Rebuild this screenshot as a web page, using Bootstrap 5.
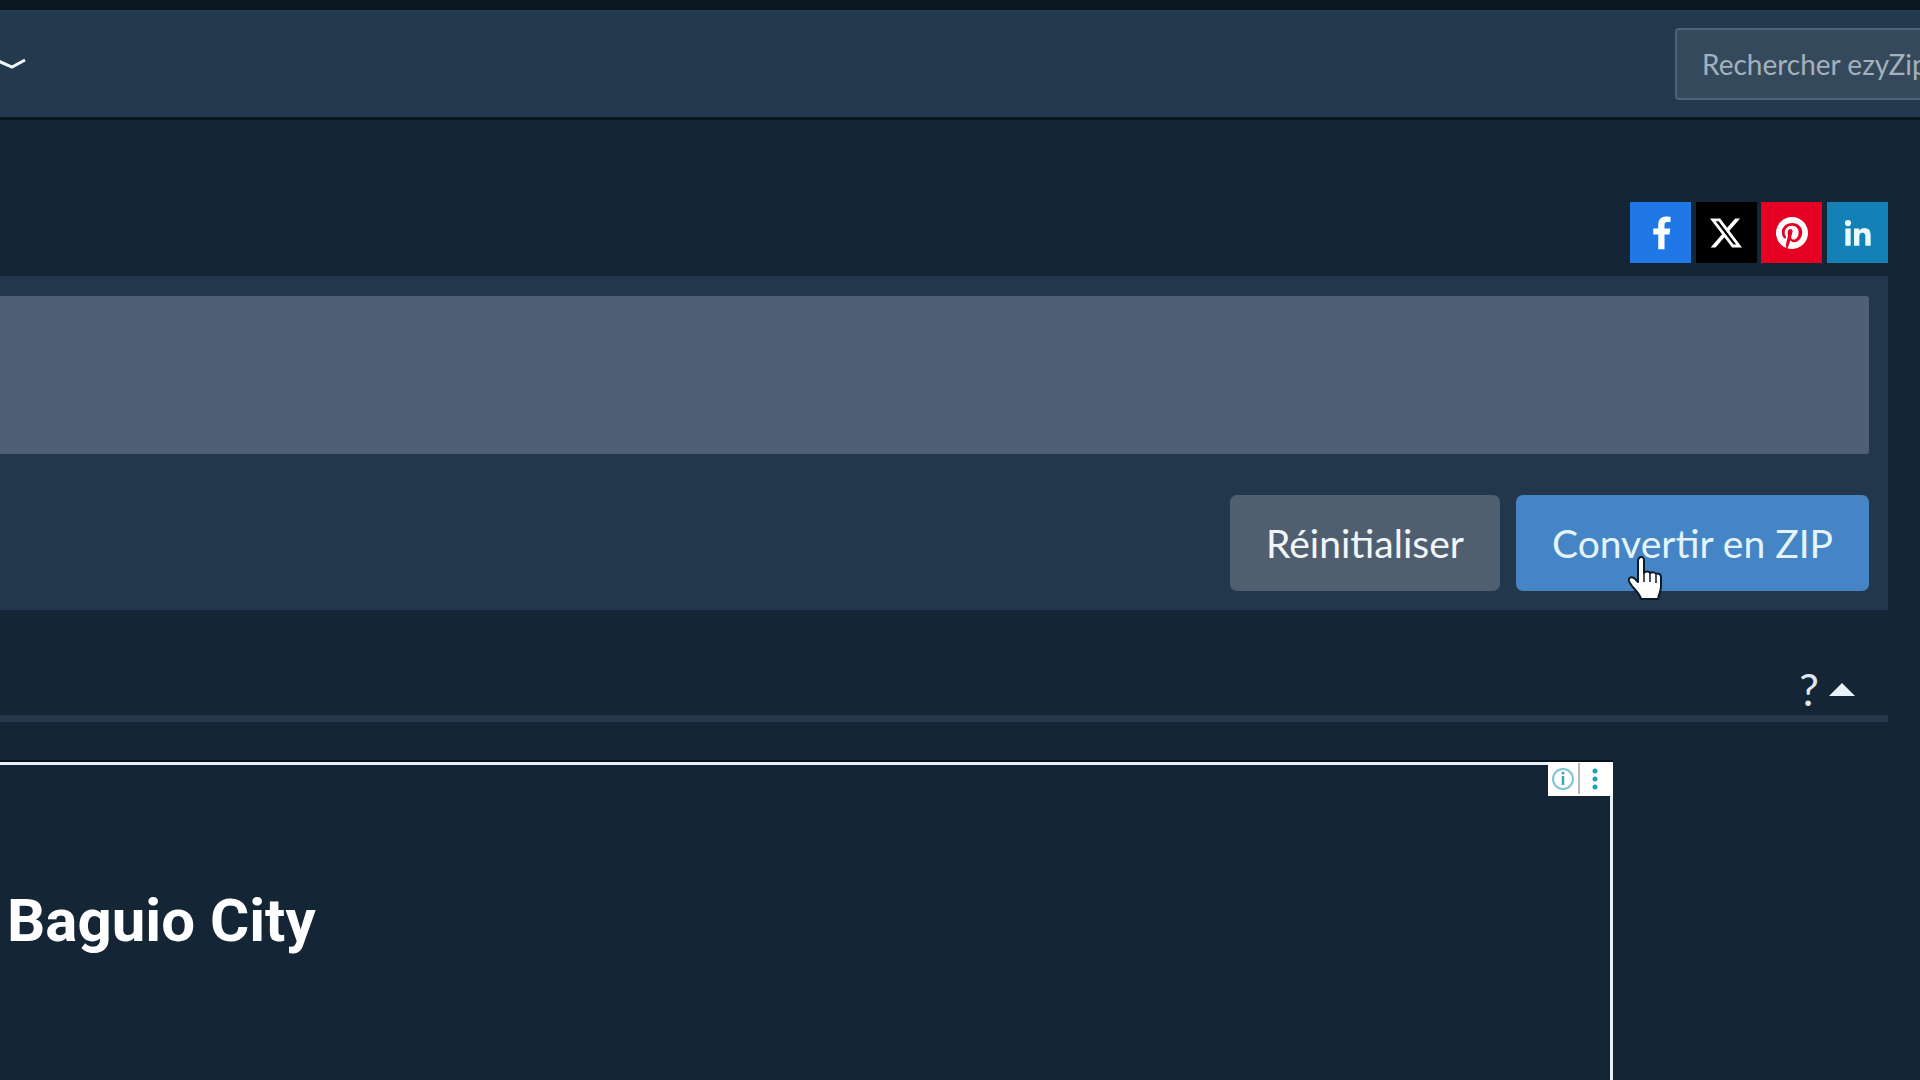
<!DOCTYPE html>
<html lang="fr">
<head>
    <meta charset="UTF-8">
    <meta name="viewport" content="width=device-width, initial-scale=1.0">
    <title>ezyZip</title>
    <link rel="stylesheet" href="https://cdn.jsdelivr.net/npm/bootstrap@5.3.0/dist/css/bootstrap.min.css">
    <style>
        html, body { height: 100%; }
        body { background: #142635; overflow: hidden; font-family: "Lato", "Liberation Sans", sans-serif; color: #e6edf3; }
        .top-strip { height: 10px; background: #0b1720; }
        .ez-nav { height: 110px; padding: 0; background: #233a4e; border-bottom: 3px solid #0b1822; flex-wrap: nowrap; }
        .nav-chevron { width: 26px; height: 14px; margin-top: 1px; flex-shrink: 0; }
        .search-box { flex: 0 0 400px; width: 400px; height: 72px; margin-left: auto; margin-right: -155px; font-size: 28px; padding: 0 25px; background: #34495c; border: 2px solid #4d6478; border-radius: 4px; color: #fff; }
        .search-box::placeholder { color: #a3b1bd; opacity: 1; }
        .share-row { margin-top: 82px; margin-right: 32px; gap: 4.6px; }
        .share-btn { width: 61px; height: 61px; }
        .share-fb { background: #1f78e5; }
        .share-x { background: #000; }
        .share-pin { background: #e60023; }
        .share-in { background: #1381b5; }
        .tool-panel { margin-top: 13px; margin-right: 32px; height: 334px; padding: 20px 19px 19px 0; background: #22374b; }
        .tool-input { height: 158px; background: #4f6076; border: 0; border-radius: 0 3px 3px 0; resize: none; }
        .tool-actions { margin-top: 41px; gap: 16px; }
        .act-btn { height: 96px; font-size: 39px; padding: 0; line-height: 1; border: 0; border-radius: 7px; color: #f2f6f8; }
        .act-reset { width: 270px; background: #505f6f; }
        .act-reset:hover { background: #505f6f; color: #f2f6f8; }
        .act-zip { width: 353px; background: #4585c5; color: #e4f4fc; position: relative; }
        .act-zip:hover { background: #4585c5; color: #e4f4fc; }
        .hand-cursor { position: absolute; left: 111px; top: 60px; width: 36px; height: 46px; }
        .help-row { height: 62px; margin-top: 43px; margin-right: 32px; padding: 10px 33px 0 0; gap: 10px; }
        .help-mark { font-size: 44px; line-height: 1; color: #dfe8ee; }
        .help-arrow { width: 0; height: 0; border-left: 13px solid transparent; border-right: 13px solid transparent; border-bottom: 13px solid #e8f2f8; margin-top: 1px; }
        .help-rule { height: 7px; margin: 0 32px 0 0; background: #24394c; border: 0; opacity: 1; }
        .ad-frame { position: relative; width: 1613px; height: 400px; margin-top: 40px; border-top: 3px solid #e8f0f8; border-right: 3px solid #e8f0f8; box-shadow: 0 -2px 0 #06101c; }
        .ad-title { padding: 120px 0 0 7px; font-family: "Roboto", "Liberation Sans", sans-serif; font-size: 60px; font-weight: 700; line-height: 1.2; color: #fff; }
        .ad-badge { position: absolute; top: -3px; right: -3px; width: 65px; height: 34px; background: #fff; }
        .ad-badge svg { display: block; }
    </style>
</head>
<body>
    <div class="top-strip"></div>

    <!-- Navbar -->
    <nav class="navbar ez-nav d-flex align-items-center">
        <svg class="nav-chevron" viewBox="0 0 26 14">
            <path d="M-4 3 L12 10 L25 3" fill="none" stroke="#f2f7fb" stroke-width="3"/>
        </svg>
        <input type="text" class="form-control search-box" placeholder="Rechercher ezyZip">
    </nav>

    <!-- Share buttons -->
    <div class="share-row d-flex justify-content-end">
        <a class="share-btn share-fb d-flex align-items-center justify-content-center" href="#">
            <svg width="40" height="40" viewBox="0 0 16 16"><path fill="#fff" d="M9.400 14.500V8.600h2l.3-2.400H9.400V4.800c0-.7.200-1.200 1.200-1.200h1.200V1.500c-.2 0-.9-.1-1.800-.1C8.200 1.400 6.900 2.500 6.900 4.600v1.600h-2v2.400h2v5.900z"/></svg>
        </a>
        <a class="share-btn share-x d-flex align-items-center justify-content-center" href="#">
            <svg width="32" height="32" viewBox="0 0 24 24"><path fill="#fff" d="M18.901 1.153h3.68l-8.04 9.19L24 22.846h-7.406l-5.8-7.584-6.638 7.584H.474l8.6-9.83L0 1.154h7.594l5.243 6.932ZM17.61 20.644h2.039L6.486 3.24H4.298Z"/></svg>
        </a>
        <a class="share-btn share-pin d-flex align-items-center justify-content-center" href="#">
            <svg width="32" height="32" viewBox="0 0 16 16"><path fill="#fff" d="M8 0a8 8 0 0 0-2.915 15.452c-.07-.633-.134-1.606.027-2.297.146-.625.938-3.977.938-3.977s-.239-.479-.239-1.187c0-1.113.645-1.943 1.448-1.943.682 0 1.012.512 1.012 1.127 0 .686-.437 1.712-.663 2.663-.188.796.4 1.446 1.185 1.446 1.422 0 2.515-1.5 2.515-3.664 0-1.915-1.377-3.254-3.342-3.254-2.276 0-3.612 1.707-3.612 3.471 0 .688.265 1.425.595 1.826a.24.24 0 0 1 .056.23c-.061.252-.196.796-.222.907-.035.146-.116.177-.268.107-1-.465-1.624-1.926-1.624-3.1 0-2.523 1.834-4.84 5.286-4.84 2.775 0 4.932 1.977 4.932 4.62 0 2.757-1.739 4.976-4.151 4.976-.811 0-1.573-.421-1.834-.919l-.498 1.902c-.181.695-.669 1.566-.995 2.097A8 8 0 1 0 8 0z"/></svg>
        </a>
        <a class="share-btn share-in d-flex align-items-center justify-content-center" href="#">
            <svg width="36" height="36" viewBox="0 0 24 24"><path fill="#e8fbff" d="M20.447 20.452h-3.554v-5.569c0-1.328-.027-3.037-1.852-3.037-1.853 0-2.136 1.445-2.136 2.939v5.667H9.351V9h3.414v1.561h.046c.477-.9 1.637-1.85 3.37-1.85 3.601 0 4.267 2.37 4.267 5.455v6.286zM5.337 7.433a2.062 2.062 0 1 1 0-4.124 2.062 2.062 0 0 1 0 4.124zM7.119 20.452H3.555V9h3.564z"/></svg>
        </a>
    </div>

    <!-- Tool panel -->
    <div class="tool-panel">
        <textarea class="form-control tool-input"></textarea>
        <div class="tool-actions d-flex justify-content-end">
            <button type="button" class="btn act-btn act-reset">Réinitialiser</button>
            <button type="button" class="btn act-btn act-zip">Convertir en ZIP
                <svg class="hand-cursor" viewBox="0 0 36 46">
                    <path fill="#fff" stroke="#0c1a28" stroke-width="2" stroke-linejoin="round" d="M12 3c2-2 5-1 5 2v13c1-2 5-2 6 0 2-1 5-1 6 1 2-1 5 0 5 3v9c0 6-2 7-3 13H14c-1-5-5-8-9-13-2-3-4-5-3-7 1-3 5-2 7 1l2 2V5z"/>
                    <path fill="none" stroke="#0c1a28" stroke-width="1.500" d="M17 18v9M23 18v9M29 20v8"/>
                </svg>
            </button>
        </div>
    </div>

    <!-- Help row -->
    <div class="help-row d-flex justify-content-end align-items-center">
        <span class="help-mark">?</span>
        <span class="help-arrow"></span>
    </div>
    <hr class="help-rule">

    <!-- Ad -->
    <div class="ad-frame">
        <div class="ad-title">Baguio City</div>
        <div class="ad-badge">
            <svg width="65" height="34" viewBox="0 0 65 34">
                <circle cx="15" cy="17" r="10" fill="none" stroke="#7fc4d2" stroke-width="2"/>
                <path d="M15 14v9" stroke="#3aa3b8" stroke-width="2.500"/>
                <circle cx="15" cy="11" r="1.500" fill="#3aa3b8"/>
                <path d="M31 1v31" stroke="#9aa5ab" stroke-width="1.500"/>
                <circle cx="47" cy="9" r="2.500" fill="#1aa5b5"/>
                <circle cx="47" cy="17" r="2.500" fill="#1aa5b5"/>
                <circle cx="47" cy="25" r="2.500" fill="#1aa5b5"/>
            </svg>
        </div>
    </div>

    <script src="https://cdn.jsdelivr.net/npm/bootstrap@5.3.0/dist/js/bootstrap.bundle.min.js"></script>
</body>
</html>
